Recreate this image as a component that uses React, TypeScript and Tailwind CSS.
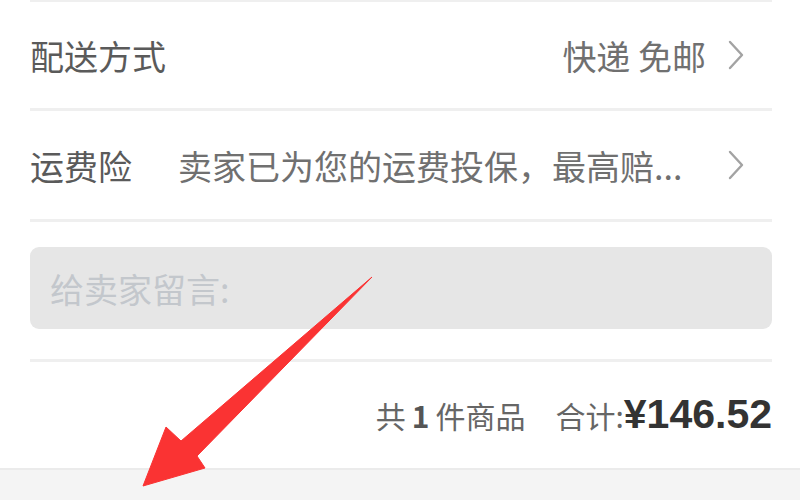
import React from 'react';

const Chevron = () => (
  <svg width="20" height="32" viewBox="0 0 20 32" className="ml-[20px] mr-[26px] shrink-0">
    <path d="M4 3 L16 16 L4 29" fill="none" stroke="#a3a3a3" strokeWidth="2.4" strokeLinecap="round" strokeLinejoin="round" />
  </svg>
);

const Sep = () => <div className="h-[3px] bg-[#efefef]" />;

const App = () => {
  return (
    <div
      className="relative w-[800px] h-[500px] overflow-hidden bg-white flex flex-col"
      style={{ fontFamily: '"Noto Sans CJK SC", "Noto Sans", sans-serif' }}
    >
      {/* list section */}
      <div className="pl-[30px] pr-[28px] flex flex-col">
        <div className="h-[2px] bg-[#efefef]" />

        {/* 配送方式 */}
        <div className="h-[106px] flex items-center justify-between text-[34px] text-[#5a5a5a]">
          <span>配送方式</span>
          <div className="flex items-center text-[#707070]">
            <span>快递 免邮</span>
            <Chevron />
          </div>
        </div>
        <Sep />

        {/* 运费险 */}
        <div className="h-[108px] flex items-center text-[34px] text-[#5a5a5a]">
          <span className="shrink-0">运费险</span>
          <span className="ml-[46px] flex-1 truncate text-[#707070]">卖家已为您的运费投保，最高赔...</span>
          <Chevron />
        </div>
        <Sep />

        {/* message box */}
        <div className="pt-[25px] pb-[30px]">
          <div className="h-[82px] rounded-[9px] bg-[#e6e6e6] flex items-center px-[20px] text-[34px] text-[#c3c7cc]">
            给卖家留言:
          </div>
        </div>
        <Sep />

        {/* total */}
        <div className="h-[106px] flex items-center justify-end text-[30px] text-[#666]">
          <span>
            共<span className="mx-[6px] font-bold text-[#555]">1</span>件商品
          </span>
          <span className="ml-[30px]">合计:</span>
          <span className="text-[41px] font-bold text-[#333]" style={{ fontFamily: '"Liberation Sans", "Noto Sans CJK SC", sans-serif' }}>
            ¥146.52
          </span>
        </div>
      </div>

      {/* bottom bar */}
      <div className="flex-1 bg-[#f4f4f4] border-t-2 border-[#ebebeb]" />

      {/* red annotation arrow */}
      <svg className="absolute inset-0 pointer-events-none" width="800" height="500" viewBox="0 0 800 500">
        <polygon
          points="372,277 197,456 205,468 143,486 166,427 181,441"
          fill="#fa3333"
          stroke="#fa3333"
          strokeWidth="1"
          strokeLinejoin="round"
        />
      </svg>
    </div>
  );
};

export default App;
